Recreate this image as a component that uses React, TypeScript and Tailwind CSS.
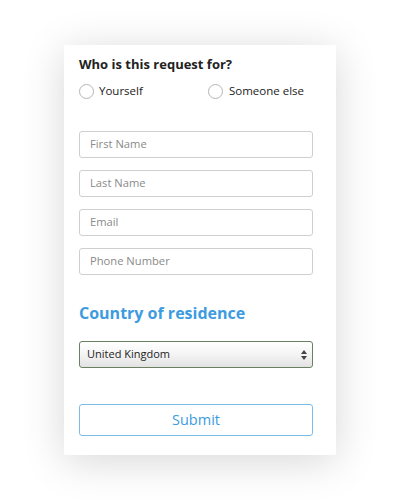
export default function App() {
  const fields = ["First Name", "Last Name", "Email", "Phone Number"];
  return (
    <div
      className="w-[400px] h-[500px] bg-white pt-[45px] pl-[64px]"
      style={{ fontFamily: '"Open Sans", "Liberation Sans", sans-serif' }}
    >
      <div className="w-[272px] h-[410px] bg-white shadow-[0_6px_40px_rgba(0,0,0,0.16)] px-[15px] pt-[9px]">
        <h2 className="text-[13px] font-bold text-[#222] leading-[20px]">Who is this request for?</h2>
        <div className="flex mt-[7px] h-[20px] items-center text-[11.5px] text-[#222]">
          <label className="flex items-center w-[129px]">
            <span className="w-[15px] h-[15px] rounded-full border border-[#b5b5b5] bg-white mr-[5px]" />
            Yourself
          </label>
          <label className="flex items-center">
            <span className="w-[15px] h-[15px] rounded-full border border-[#b5b5b5] bg-white mr-[6px]" />
            Someone else
          </label>
        </div>
        <div className="flex flex-col gap-[12px] mt-[30px] w-[234px]">
          {fields.map((f) => (
            <div
              key={f}
              className="h-[27px] rounded-[3px] border border-[#cfcfcf] flex items-center px-[10px] text-[11.2px] text-[#8a8a8a]"
            >
              {f}
            </div>
          ))}
        </div>
        <h3 className="mt-[26px] text-[16px] font-bold text-[#3d9be0] leading-[24px]">Country of residence</h3>
        <div className="mt-[16px] w-[234px] h-[27px] rounded-[3px] border border-[#6b8060] bg-gradient-to-b from-[#ffffff] via-[#f4f4f4] to-[#e2e2e2] flex items-center justify-between pl-[7px] pr-[5px] text-[11px] text-[#222]">
          <span>United Kingdom</span>
          <svg width="6" height="10" viewBox="0 0 6 10">
            <path d="M3 0 L6 4 L0 4 Z" fill="#444" />
            <path d="M0 6 L6 6 L3 10 Z" fill="#444" />
          </svg>
        </div>
        <button className="mt-[36px] w-[234px] h-[32px] rounded-[3px] border border-[#7dbbe9] text-[14.5px] text-[#3d9be0] bg-white">
          Submit
        </button>
      </div>
    </div>
  );
}
